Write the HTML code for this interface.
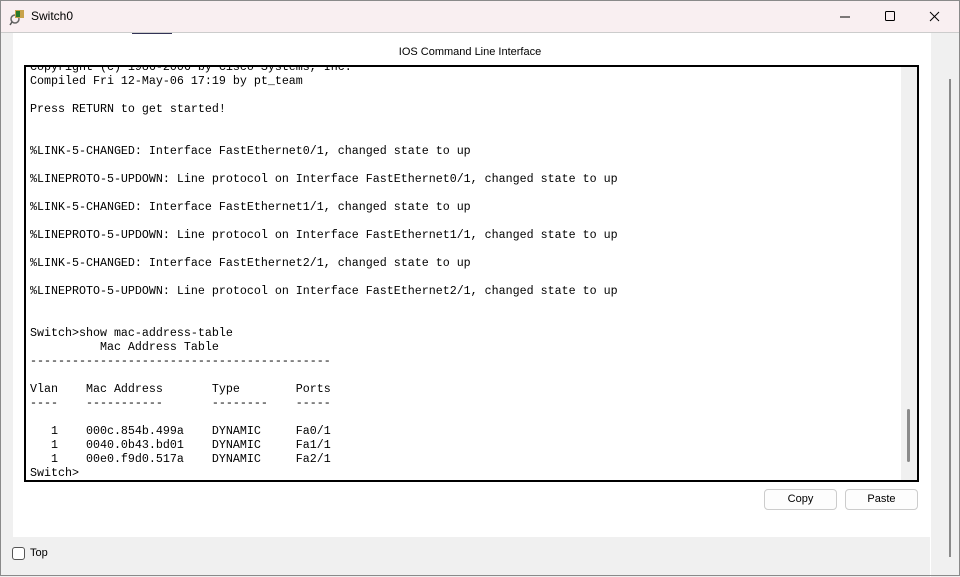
<!DOCTYPE html>
<html><head><style>
*{margin:0;padding:0;box-sizing:border-box}
body{width:960px;height:576px;overflow:hidden;background:#f0f0f0;font-family:"Liberation Sans",sans-serif;position:relative}
.frame{position:absolute;left:0;top:0;width:960px;height:576px;border:1px solid #8a8a8a;z-index:5;pointer-events:none}
.w{position:absolute;left:0;top:1px;width:960px;height:575px}
.title{position:absolute;left:0;top:-1px;width:960px;height:33px;background:#f9eff1;border-bottom:1px solid #ccc}
.title span{position:absolute;left:31px;top:9px;font-size:12px;color:#000}
.panel{position:absolute;left:13px;top:32px;width:917px;height:504px;background:#fff}
.hdr{position:absolute;left:0;width:940px;top:45px;text-align:center;font-size:11px;color:#000}
.term{position:absolute;left:24px;top:64px;width:895px;height:417px;border:2px solid #000;background:#fff;overflow:hidden}
.term pre{position:absolute;left:4px;top:-7px;font-family:"Liberation Mono",monospace;font-size:11.67px;line-height:14px;color:#000}
.sb{position:absolute;right:0;top:0;width:16px;height:100%;background:#f0f0f0}
.thumb{position:absolute;left:6px;top:342px;width:3px;height:53px;background:#8a8a8a;border-radius:2px}
.btn{position:absolute;top:488px;width:73px;height:21px;border:1px solid #ccc;border-radius:4px;background:#fdfdfd;font-size:11px;text-align:center;line-height:19px}
.rs{position:absolute;left:930px;top:32px;width:30px;height:544px;background:#f0f0f0;border-left:1px solid #fff}
.rs i{position:absolute;left:18px;top:46px;width:2px;height:478px;background:#8a8a8a}
.cb{position:absolute;left:12px;top:546px;width:13px;height:13px;border:1px solid #555;border-radius:3px;background:#fff}
</style></head><body>
<div class="frame"></div>
<div class="w">
<div class="title">
<svg style="position:absolute;left:9px;top:8px" width="18" height="18" viewBox="0 0 18 18"><circle cx="6" cy="11" r="4" fill="none" stroke="#666" stroke-width="1.5"/><rect x="6" y="2" width="9" height="8" fill="#c8a24a"/><rect x="7" y="3" width="4" height="6" fill="#2a7a2a"/><line x1="3" y1="14" x2="1" y2="17" stroke="#555" stroke-width="1.5"/></svg>
<span>Switch0</span>
<svg style="position:absolute;left:840px;top:11px" width="110" height="12"><line x1="0" y1="6" x2="10" y2="6" stroke="#000"/><rect x="45.5" y="0.5" width="9" height="9" rx="1" fill="none" stroke="#000"/><path d="M90 1 L99 10 M99 1 L90 10" stroke="#000"/></svg>
</div>
<div class="panel"></div>
<div style="position:absolute;left:132px;top:32px;width:40px;height:1px;background:#335"></div>
<div class="hdr">IOS Command Line Interface</div>
<div class="term"><pre>Copyright (c) 1986-2006 by Cisco Systems, Inc.
Compiled Fri 12-May-06 17:19 by pt_team

Press RETURN to get started!


%LINK-5-CHANGED: Interface FastEthernet0/1, changed state to up

%LINEPROTO-5-UPDOWN: Line protocol on Interface FastEthernet0/1, changed state to up

%LINK-5-CHANGED: Interface FastEthernet1/1, changed state to up

%LINEPROTO-5-UPDOWN: Line protocol on Interface FastEthernet1/1, changed state to up

%LINK-5-CHANGED: Interface FastEthernet2/1, changed state to up

%LINEPROTO-5-UPDOWN: Line protocol on Interface FastEthernet2/1, changed state to up


Switch>show mac-address-table
          Mac Address Table
-------------------------------------------

Vlan    Mac Address       Type        Ports
----    -----------       --------    -----

   1    000c.854b.499a    DYNAMIC     Fa0/1
   1    0040.0b43.bd01    DYNAMIC     Fa1/1
   1    00e0.f9d0.517a    DYNAMIC     Fa2/1
Switch></pre><div class="sb"><div class="thumb"></div></div></div>
<div class="btn" style="left:764px">Copy</div>
<div class="btn" style="left:845px">Paste</div>
<div class="rs"><i></i></div>
<div class="cb"></div>
<div style="position:absolute;left:30px;top:546px;font-size:11px">Top</div>
</div>
</body></html>
